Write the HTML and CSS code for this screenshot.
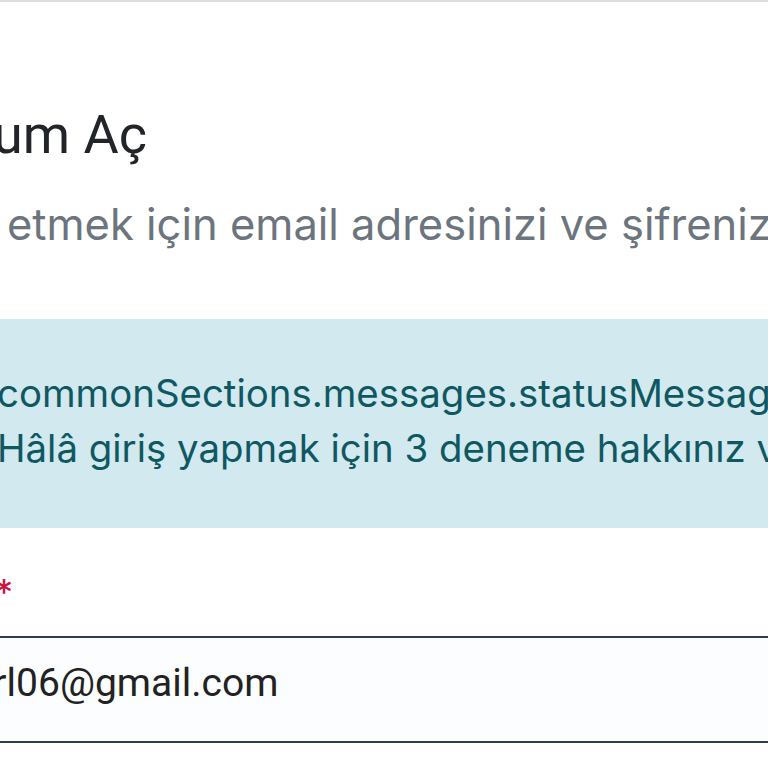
FILE: index.html
```html
<!DOCTYPE html>
<html lang="tr">
<head>
  <meta charset="UTF-8" />
  <meta name="viewport" content="width=device-width, initial-scale=1.0"/>
  <title>Oturum Aç</title>
  <link rel="stylesheet" href="styles.css">
</head>
<body>

  <div class="page">
    <div class="login">
      <h1 class="title">Oturum Aç</h1>
      <p class="subtitle">Devam etmek için email adresinizi ve şifrenizi girin.</p>

      <div class="alert">
        <div class="alert-key">commonSections.messages.statusMessage</div>
        <div>Hâlâ giriş yapmak için 3 deneme hakkınız var.</div>
      </div>

      <form class="field">
        <label class="label" for="email">Email <span class="req">*</span></label>
        <input class="input" id="email" type="email" value="user.earl06@gmail.com">
      </form>
    </div>
  </div>

</body>
</html>
```

FILE: styles.css
```css
* {
  box-sizing: border-box;
}

html, body {
  margin: 0;
  padding: 0;
  background: #fff;
  font-family: 'Inter', 'Noto Sans', sans-serif;
}

body {
  overflow: hidden;
  height: 768px;
}

.page {
  border-top: 2px solid #dedede;
  height: 100%;
}

/* the form is wider than the window, so both sides run off */
.login {
  width: 1400px;
  margin-left: -180px;
  padding-top: 99px;
}

.title {
  font-family: 'Roboto', sans-serif;
  font-weight: 400;
  font-size: 54px;
  line-height: 68px;
  color: #212529;
  margin: 0 0 0 70px;
}

.subtitle {
  font-size: 43.5px;
  line-height: 56px;
  color: #6c757d;
  margin: 27px 0 0 32px;
}

.alert {
  margin-top: 67px;
  background: #d1e9ef;
  color: #0f5862;
  font-size: 38.4px;
  line-height: 55px;
  padding: 47px 0 0 177px;
  height: 209px;
}

.field {
  margin: 44px 0 0;
}

.label {
  display: block;
  font-size: 36px;
  line-height: 40px;
  color: #212529;
  text-align: right;
  width: 193px;
}

.req {
  color: #d0103f;
}

.input {
  display: block;
  width: 100%;
  height: 107px;
  margin-top: 24px;
  border: 0;
  border-top: 2px solid #2e3d4d;
  border-bottom: 2px solid #2e3d4d;
  background: #fbfdfe;
  font-family: 'Roboto', sans-serif;
  font-size: 39px;
  color: #222;
  padding: 0 0 14px 48px;
  outline: none;
}
```
